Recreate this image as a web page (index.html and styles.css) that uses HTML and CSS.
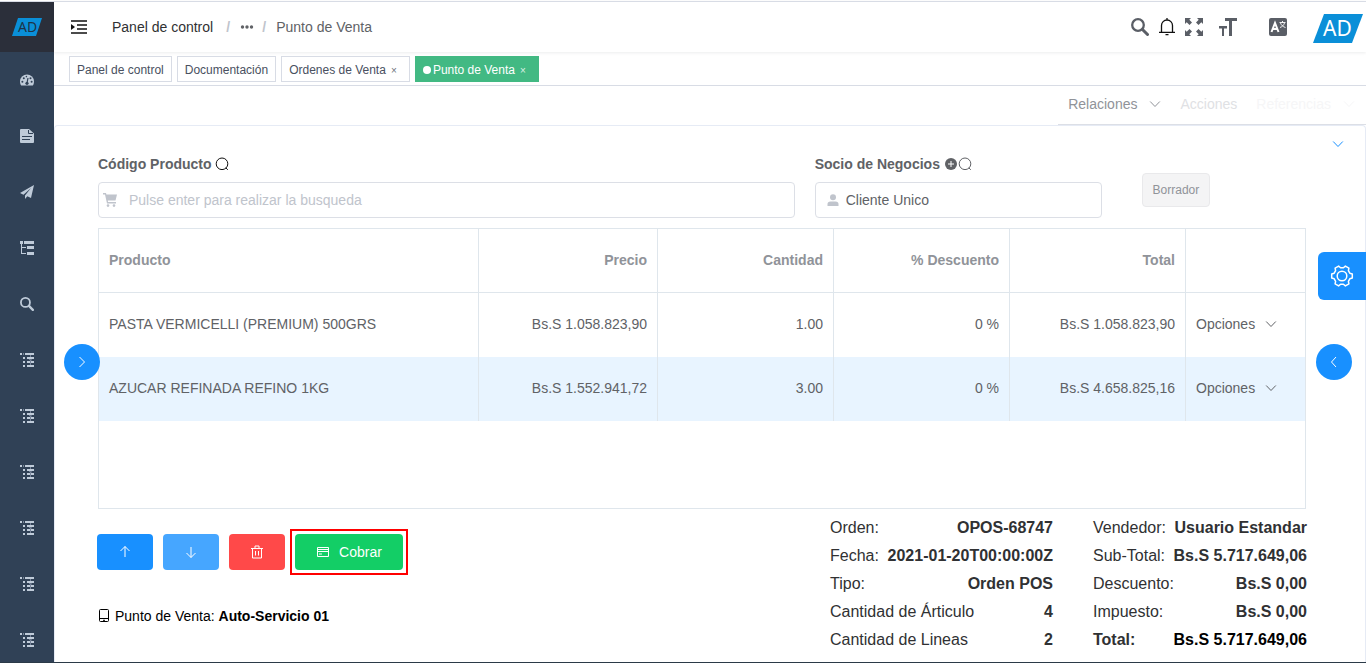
FILE: index.html
```html
<!DOCTYPE html>
<html lang="es">
<head>
  <meta charset="UTF-8">
  <meta name="viewport" content="width=device-width, initial-scale=1.0">
  <title>Punto de Venta</title>
  <link rel="stylesheet" href="styles.css">
</head>
<body>
  <!-- Shared icons -->
  <svg class="sprite" aria-hidden="true">
    <symbol id="search" viewBox="0 0 18 18"><circle cx="7" cy="7" r="5.8" fill="none" stroke="currentColor" stroke-width="2.300"/><path d="M11.500 11.500l5 5" stroke="currentColor" stroke-width="3" stroke-linecap="round"/></symbol>
    <symbol id="search-thin" viewBox="0 0 14 14"><circle cx="7" cy="6.800" r="5.800" fill="none" stroke="currentColor"/><path d="M10.800 10.800l2 2" stroke="currentColor"/></symbol>
    <symbol id="down" viewBox="0 0 12 12"><path d="M1.200 3.500L6 8.500l4.800-5" fill="none" stroke="currentColor"/></symbol>
    <symbol id="nested" viewBox="0 0 14 14"><path d="M0 0h2v2H0zM3 .5h1v1H3zM5 0h9v2H5zM3 4h2v2H3zM7 4h7v2H7zM3 8h2v2H3zM7 8h7v2H7zM3 12h2v2H3zM7 12h7v2H7z" fill="currentColor"/><path d="M10.500 2v2M9 6.500l3 .5M10.500 7v5" stroke="#77849a"/></symbol>
  </svg>

  <div class="app">
    <aside class="sidebar">
      <a href="#" class="sidebar-logo" aria-label="Inicio">
        <svg width="30" height="18" viewBox="0 0 30 18"><path d="M6 0h24l-6 18H0z" fill="#0a8fd8"/><text x="6" y="14" font-size="14">AD</text></svg>
      </a>
      <nav>
        <a href="#" aria-label="Panel de control"><svg viewBox="0 0 14 14"><path d="M0 8.500a7 7 0 0 1 14 0c0 1.500-.4 3-1.200 4H1.200C.4 11.500 0 10 0 8.500z" fill="currentColor"/><path d="M7 10l1-5" stroke="#304156" stroke-width="1.200"/><g fill="#304156"><circle cx="7" cy="10.300" r="1.600"/><circle cx="2.400" cy="8.800" r="1"/><circle cx="3.800" cy="5.200" r="1"/><circle cx="6.400" cy="3.600" r=".8"/><circle cx="10.500" cy="5.200" r="1"/><circle cx="11.600" cy="8.800" r="1"/></g></svg></a>
        <a href="#" aria-label="Documentación"><svg viewBox="0 0 14 14"><path d="M1 0h8l5 4.500V13a1 1 0 0 1-1 1H1a1 1 0 0 1-1-1V1a1 1 0 0 1 1-1z" fill="currentColor"/><path d="M8.500 1v3.500H13M2 7.500h10M2 10.500h8" fill="none" stroke="#304156"/></svg></a>
        <a href="#" aria-label="Guía"><svg viewBox="0 0 14 14"><path d="M14 0L0 8l3.500 1.700L11 3l-6 7.500V14l2.300-2.700L11 13z" fill="currentColor"/></svg></a>
        <a href="#" aria-label="Menú"><svg viewBox="0 0 14 14"><path d="M0 0h3v3H2v3h4v1H2v5h4v1H1V3H0zM4 0h10v3H4zM7 5h7v3H7zM7 11h7v3H7z" fill="currentColor"/></svg></a>
        <a href="#" aria-label="Buscar"><svg><use href="#search"/></svg></a>
        <a href="#" aria-label="Carpeta 1"><svg><use href="#nested"/></svg></a>
        <a href="#" aria-label="Carpeta 2"><svg><use href="#nested"/></svg></a>
        <a href="#" aria-label="Carpeta 3"><svg><use href="#nested"/></svg></a>
        <a href="#" aria-label="Carpeta 4"><svg><use href="#nested"/></svg></a>
        <a href="#" aria-label="Carpeta 5"><svg><use href="#nested"/></svg></a>
        <a href="#" aria-label="Carpeta 6"><svg><use href="#nested"/></svg></a>
      </nav>
    </aside>

    <div class="main">
      <header class="navbar">
        <button class="icon-btn hamburger" aria-label="Menú lateral"><svg width="16" height="14" viewBox="0 0 16 14"><path d="M0 1h16M6 5h10M6 9h10M0 13h16" stroke="#111" stroke-width="1.500"/><path d="M0 4l4 3-4 3z" fill="#111"/></svg></button>
        <div class="breadcrumb">
          <a href="#">Panel de control</a>
          <span class="sep">/</span>
          <svg width="14" height="4" viewBox="0 0 14 4" fill="#606266"><circle cx="2.500" cy="2" r="1.700"/><circle cx="7" cy="2" r="1.700"/><circle cx="11.500" cy="2" r="1.700"/></svg>
          <span class="sep">/</span>
          <span>Punto de Venta</span>
        </div>
        <div class="nav-right">
          <button class="icon-btn" aria-label="Buscar"><svg width="18" height="18"><use href="#search"/></svg></button>
          <button class="icon-btn bell" aria-label="Avisos"><svg width="16" height="18" viewBox="0 0 16 18" fill="none" stroke="#111" stroke-width="1.300"><path d="M0 14.300h16M2.500 14V7.500a5.500 5.500 0 0 1 11 0V14M8 0v2M6.500 16.700h3"/></svg></button>
          <button class="icon-btn" aria-label="Pantalla completa"><svg width="18" height="18" viewBox="0 0 18 18" fill="currentColor"><path d="M0 0h6L4.300 1.700 7 4.500 4.500 7 1.700 4.300 0 6zM18 0v6l-1.700-1.700L13.500 7 11 4.500l2.700-2.800L12 0zM0 18v-6l1.700 1.700L4.500 11 7 13.500l-2.700 2.800L6 18zM18 18h-6l1.700-1.700-2.700-2.800 2.500-2.500 2.800 2.700L18 12z"/></svg></button>
          <button class="icon-btn size" aria-label="Tamaño de letra"><svg width="18" height="18" viewBox="0 0 18 18" fill="currentColor"><path d="M6 0h12v3h-5v15h-3V3H6zM0 8h8v2.500H5V18H3v-7.500H0z"/></svg></button>
          <button class="icon-btn lang" aria-label="Idioma"><svg width="18" height="18" viewBox="0 0 18 18"><rect width="18" height="18" rx="2" fill="#5a5e66"/><path d="M2.500 14L6 5l3.500 9M3.700 11h4.600" fill="none" stroke="#fff" stroke-width="2"/><path d="M10.500 4.500h6M13.500 3v1.500M15.500 5c-.8 2.500-2.500 3.800-4.500 4.500M11.500 5c.8 2.300 2.500 3.800 5 4.500" fill="none" stroke="#fff" stroke-width=".9"/></svg></button>
          <a href="#" class="avatar" aria-label="Perfil"><svg width="50" height="33" viewBox="0 0 50 33"><path d="M11 4h39L39 33H0z" fill="#0a8fd8"/><text x="10" y="26" font-size="21">AD</text></svg></a>
        </div>
      </header>

      <nav class="tags">
        <a href="#" class="tag">Panel de control</a>
        <a href="#" class="tag">Documentación</a>
        <a href="#" class="tag">Ordenes de Venta<span class="close">×</span></a>
        <a href="#" class="tag active">Punto de Venta<span class="close">×</span></a>
      </nav>

      <div class="context">
        <nav class="context-menu">
          <a href="#">Relaciones <svg width="12" height="12"><use href="#down"/></svg></a>
          <a href="#" class="disabled">Acciones</a>
          <a href="#" class="faded">Referencias <svg width="12" height="12"><use href="#down"/></svg></a>
        </nav>
      </div>

      <main class="card">
        <button class="icon-btn collapse" aria-label="Mostrar cabecera"><svg width="12" height="12"><use href="#down"/></svg></button>

        <form class="order-form">
          <div class="field">
            <label for="product">Código Producto <svg class="dark" width="14" height="14"><use href="#search-thin"/></svg></label>
            <div class="input-box">
              <svg width="14" height="14" viewBox="0 0 14 14" fill="#c0c4cc"><path d="M0 0h3l.4 1.500H14l-1.500 6H4.800l.2 1.500h8v1.500H4L2 1.500H0z"/><circle cx="5" cy="12.600" r="1.300"/><circle cx="11" cy="12.600" r="1.300"/></svg>
              <input type="text" id="product" placeholder="Pulse enter para realizar la busqueda">
            </div>
          </div>
          <div class="field">
            <label for="partner">Socio de Negocios <svg width="14" height="14" viewBox="0 0 14 14"><circle cx="7" cy="7" r="6" fill="#606266"/><path d="M4 7h6M7 4v6" stroke="#fff"/></svg><svg width="14" height="14"><use href="#search-thin"/></svg></label>
            <div class="input-box partner">
              <svg width="12" height="12" viewBox="0 0 12 12" fill="#c0c4cc"><circle cx="6" cy="3.300" r="3"/><path d="M0.500 12v-2q0-2.500 3-2.500h5q3 0 3 2.500v2z"/></svg>
              <input type="text" id="partner" value="Cliente Unico">
            </div>
          </div>
          <div class="status"><button type="button">Borrador</button></div>
        </form>

        <div class="table-box">
          <table>
            <colgroup><col><col class="price"><col class="number"><col class="number"><col class="number"><col class="options"></colgroup>
            <thead>
              <tr><th>Producto</th><th>Precio</th><th>Cantidad</th><th>% Descuento</th><th>Total</th><th></th></tr>
            </thead>
            <tbody>
              <tr>
                <td>PASTA VERMICELLI (PREMIUM) 500GRS</td><td>Bs.S 1.058.823,90</td><td>1.00</td><td>0 %</td><td>Bs.S 1.058.823,90</td>
                <td><button class="option-btn">Opciones <svg width="12" height="12"><use href="#down"/></svg></button></td>
              </tr>
              <tr class="current">
                <td>AZUCAR REFINADA REFINO 1KG</td><td>Bs.S 1.552.941,72</td><td>3.00</td><td>0 %</td><td>Bs.S 4.658.825,16</td>
                <td><button class="option-btn">Opciones <svg width="12" height="12"><use href="#down"/></svg></button></td>
              </tr>
            </tbody>
          </table>
        </div>

        <footer class="order-footer">
          <div class="left">
            <div class="actions">
              <button class="btn" aria-label="Subir"><svg width="14" height="14" viewBox="0 0 14 14"><path d="M7 12V1.500M2.500 6L7 1.500 11.500 6"/></svg></button>
              <button class="btn light" aria-label="Bajar"><svg width="14" height="14" viewBox="0 0 14 14"><path d="M7 2v10.500M2.500 8L7 12.500 11.500 8"/></svg></button>
              <button class="btn danger" aria-label="Eliminar"><svg width="14" height="14" viewBox="0 0 14 14"><path d="M1 3.500h12M2.500 3.500v9.500h9V3.500M5 3.500V1h4v2.500M5.500 6v4.500M8.500 6v4.500"/></svg></button>
              <div class="highlight">
                <button class="btn success"><svg width="14" height="14" viewBox="0 0 14 14"><path d="M1.500 2.500h11v9h-11zM1.500 4.500h11M1.500 6.500h11M3 9h3"/></svg>Cobrar</button>
              </div>
            </div>
            <p class="pos"><svg width="12" height="14" viewBox="0 0 12 14" fill="none" stroke="currentColor"><rect x="1.500" y=".5" width="9" height="12" rx="1"/><path d="M1.500 9.500h9M5 11.300h2"/></svg>Punto de Venta: <b>Auto-Servicio 01</b></p>
          </div>
          <dl class="summary order">
            <div><dt>Orden:</dt><dd>OPOS-68747</dd></div>
            <div><dt>Fecha:</dt><dd>2021-01-20T00:00:00Z</dd></div>
            <div><dt>Tipo:</dt><dd>Orden POS</dd></div>
            <div><dt>Cantidad de Árticulo</dt><dd>4</dd></div>
            <div><dt>Cantidad de Lineas</dt><dd>2</dd></div>
          </dl>
          <dl class="summary totals">
            <div><dt>Vendedor:</dt><dd>Usuario Estandar</dd></div>
            <div><dt>Sub-Total:</dt><dd>Bs.S 5.717.649,06</dd></div>
            <div><dt>Descuento:</dt><dd>Bs.S 0,00</dd></div>
            <div><dt>Impuesto:</dt><dd>Bs.S 0,00</dd></div>
            <div class="grand"><dt>Total:</dt><dd>Bs.S 5.717.649,06</dd></div>
          </dl>
        </footer>
      </main>
    </div>
  </div>

  <!-- Floating panel buttons -->
  <button class="float-btn float-left" aria-label="Abrir panel izquierdo"><svg width="14" height="14" viewBox="0 0 14 14"><path d="M4.500 2l5 5-5 5"/></svg></button>
  <button class="float-btn float-right" aria-label="Abrir panel derecho"><svg width="14" height="14" viewBox="0 0 14 14"><path d="M9 2L4.500 7 9 12"/></svg></button>
  <button class="settings" aria-label="Configuración"><svg width="24" height="24" viewBox="0 0 24 24" fill="none" stroke="#fff" stroke-width="1.500" stroke-linejoin="round"><circle cx="12" cy="12" r="4.800"/><path d="M22.300 10v4l-2.500.8-1.400 2.500.5 2.600-3.500 2-2-1.700h-2.800l-2 1.700-3.500-2 .5-2.600-1.400-2.500-2.500-.8v-4l2.500-.8 1.400-2.500-.5-2.600 3.500-2 2 1.700h2.800l2-1.700 3.500 2-.5 2.600 1.400 2.500z"/></svg></button>
</body>
</html>
```

FILE: styles.css
```css
* {
  box-sizing: border-box;
}
body {
  margin: 0;
  font-family: "Liberation Sans", Arial, sans-serif;
  font-size: 14px;
  color: #606266;
  background: #fff;
}
a {
  color: inherit;
  text-decoration: none;
}
button, input {
  font: inherit;
  color: inherit;
}
button {
  cursor: pointer;
}
svg {
  flex: none;
}
.sprite {
  position: absolute;
  width: 0;
  height: 0;
}
.app {
  display: flex;
  height: 100vh;
  padding-top: 1px;
  border-bottom: 1px solid #2b3a48;
  overflow: hidden;
}
.app::before {
  content: "";
  position: absolute;
  left: 0;
  right: 0;
  height: 1px;
  background: #d8dce5;
}
.sidebar {
  flex: none;
  width: 54px;
  margin-top: 1px;
  background: #304156;
}
.sidebar-logo {
  display: flex;
  align-items: center;
  justify-content: center;
  height: 50px;
  background: #2b2f3a;
}
.sidebar-logo text, .avatar text {
  font-family: "Noto Sans", sans-serif;
}
.sidebar-logo text {
  fill: #1d3348;
}
.avatar text {
  fill: #fff;
}
.sidebar nav a {
  display: flex;
  align-items: center;
  justify-content: center;
  height: 56px;
  color: #bfcbd9;
}
.sidebar nav svg {
  width: 14px;
  height: 14px;
}
.main {
  flex: 1;
  min-width: 0;
  display: flex;
  flex-direction: column;
}

/* Navbar */
.navbar {
  display: flex;
  align-items: center;
  flex: none;
  height: 51px;
  padding: 0 3px 0 17px;
  box-shadow: 0 1px 3px rgba(0, 21, 41, 0.08);
}
.icon-btn {
  display: flex;
  padding: 0;
  border: none;
  background: none;
  color: #5a5e66;
}
.breadcrumb {
  display: flex;
  align-items: center;
  margin-left: 25px;
}
.breadcrumb a {
  color: #303133;
}
.breadcrumb .sep {
  width: 4px;
  margin: 0 10px;
  color: #c0c4cc;
  font-weight: bold;
}
.breadcrumb a + .sep {
  margin-left: 13px;
}
.breadcrumb svg + .sep {
  margin-left: 8px;
}
.nav-right {
  display: flex;
  align-items: center;
  gap: 10px;
  margin-left: auto;
}
.size {
  margin-left: 6px;
}
.lang {
  margin-left: 22px;
}
.avatar {
  display: flex;
  margin-left: 16px;
}

/* Opened tabs */
.tags {
  display: flex;
  flex: none;
  gap: 5px;
  height: 34px;
  padding: 4px 15px;
  border-bottom: 1px solid #d8dce5;
}
.tag {
  height: 26px;
  padding: 0 7px;
  border: 1px solid #d8dce5;
  font-size: 12px;
  line-height: 26px;
  color: #495060;
}
.tag .close {
  display: inline-block;
  width: 16px;
  text-align: center;
  font-size: 10px;
  opacity: 0.8;
}
.tag.active {
  background: #42b983;
  border-color: #42b983;
  color: #fff;
}
.tag.active::before {
  content: "";
  display: inline-block;
  width: 8px;
  height: 8px;
  margin-right: 2px;
  border-radius: 50%;
  background: #fff;
}

/* Context menu */
.context {
  display: flex;
  flex: none;
  justify-content: flex-end;
  height: 39px;
}
.context-menu {
  display: flex;
  gap: 19px;
  padding: 0 11px 2px 10px;
  border-bottom: 1px solid #dcdfe6;
  color: #909399;
}
.context-menu a {
  display: flex;
  align-items: center;
  gap: 12px;
}
.context-menu .disabled {
  color: #e0e1e4;
}
.context-menu .faded {
  color: #f6f6f7;
}

.card {
  position: relative;
  flex: 1;
  padding: 20px 59px 0 43px;
  border: 1px solid #e6ebf5;
  border-bottom: none;
  border-radius: 4px 4px 0 0;
}
.collapse {
  position: absolute;
  top: 12px;
  right: 21px;
  color: #1890ff;
}

/* Order form */
.order-form {
  display: grid;
  grid-template-columns: 34fr 14fr 9fr;
  gap: 20px;
}
.field label {
  display: flex;
  align-items: center;
  height: 36px;
  font-weight: bold;
  white-space: pre;
}
.field .dark {
  color: #111;
}
.input-box {
  display: flex;
  align-items: center;
  gap: 12px;
  height: 36px;
  padding: 0 4px;
  border: 1px solid #dcdfe6;
  border-radius: 4px;
}
.input-box.partner {
  gap: 7px;
  padding-left: 11px;
}
.input-box input {
  flex: 1;
  min-width: 0;
  padding: 0;
  border: none;
  outline: none;
  background: none;
}
.input-box input::placeholder {
  color: #c0c4cc;
}
.status button {
  height: 34px;
  margin: 27px 0 0 20px;
  padding: 0 10px;
  border: 1px solid #e9e9eb;
  border-radius: 4px;
  background: #f4f4f5;
  color: #909399;
  font-size: 12px;
}

/* Product lines */
.table-box {
  min-height: 281px;
  margin-top: 10px;
  border: 1px solid #dfe6ec;
}
table {
  width: 100%;
  table-layout: fixed;
  border-collapse: separate;
  border-spacing: 0;
}
.price {
  width: 179px;
}
.number {
  width: 176px;
}
.options {
  width: 119px;
}
th, td {
  height: 64px;
  padding: 0 10px 2px;
  border-right: 1px solid #dfe6ec;
  text-align: right;
}
th {
  border-bottom: 1px solid #dfe6ec;
  color: #909399;
}
th:first-child, td:first-child, td:last-child {
  text-align: left;
}
th:last-child, td:last-child {
  border-right: none;
}
.current {
  background: #e8f4ff;
}
.option-btn {
  display: flex;
  align-items: center;
  gap: 10px;
  padding: 0;
  border: none;
  background: none;
}

/* Footer */
.order-footer {
  display: flex;
  margin: 0 -1px;
  padding-top: 5px;
}
.left {
  flex: 1;
  padding-top: 20px;
}
.actions {
  display: flex;
  gap: 10px;
}
.btn {
  display: flex;
  align-items: center;
  justify-content: center;
  gap: 9px;
  width: 56px;
  height: 36px;
  padding: 0;
  border: none;
  border-radius: 4px;
  background: #1890ff;
  color: #fff;
}
.btn svg, .float-btn svg {
  fill: none;
  stroke: #fff;
}
.btn.light {
  background: #46a6ff;
}
.btn.danger {
  background: #ff4949;
}
.btn.success {
  width: 108px;
  background: #13ce66;
}
.highlight {
  outline: 2px solid #f00;
  outline-offset: 3px;
}
.pos {
  display: flex;
  align-items: center;
  margin: 38px 0 0 1px;
  color: #000;
  white-space: pre;
}
.pos svg {
  margin-right: 5px;
}
.summary {
  margin: 0;
  font-size: 16px;
  line-height: 28px;
  color: #303133;
}
.summary.order {
  width: 223px;
  margin-right: 40px;
}
.summary.totals {
  width: 214px;
}
.summary div {
  display: flex;
  justify-content: space-between;
  white-space: nowrap;
}
.summary dd {
  margin: 0;
  font-weight: bold;
}
.grand dt {
  font-weight: bold;
}
.grand dd {
  color: #000;
}

/* Floating buttons */
.float-btn {
  position: absolute;
  top: 344px;
  display: flex;
  align-items: center;
  justify-content: center;
  width: 36px;
  height: 36px;
  padding: 0;
  border: none;
  border-radius: 50%;
  background: #1890ff;
}
.float-left {
  left: 64px;
}
.float-right {
  right: 14px;
}
.settings {
  position: absolute;
  top: 252px;
  right: 0;
  display: flex;
  align-items: center;
  justify-content: center;
  width: 48px;
  height: 48px;
  padding: 0;
  border: none;
  border-radius: 6px 0 0 6px;
  background: #1890ff;
}
```
